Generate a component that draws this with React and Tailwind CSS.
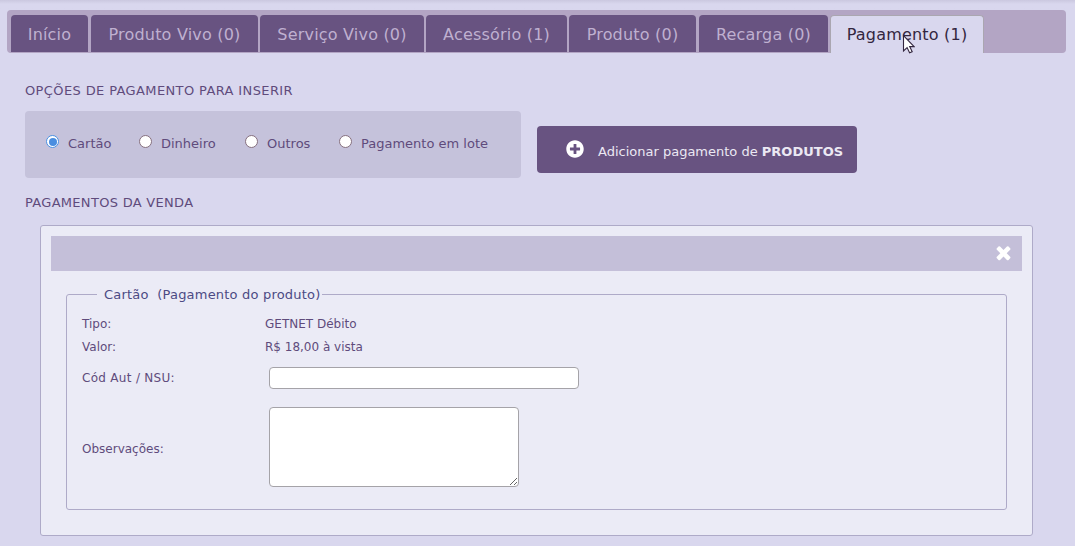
import { FaPlusCircle } from "react-icons/fa";

const tabs = [
  { label: "Início", cls: "ml-1 w-[77px]" },
  { label: "Produto Vivo (0)", cls: "ml-[3px] w-[167px]" },
  { label: "Serviço Vivo (0)", cls: "ml-[2px] w-[164px]" },
  { label: "Acessório (1)", cls: "ml-[2px] w-[141px]" },
  { label: "Produto (0)", cls: "ml-[2px] w-[127px]" },
  { label: "Recarga (0)", cls: "ml-[3px] w-[129px]" },
];

const options = [
  { label: "Cartão", cls: "w-[93px]", checked: true },
  { label: "Dinheiro", cls: "w-[106px]" },
  { label: "Outros", cls: "w-[94px]" },
  { label: "Pagamento em lote", cls: "w-[150px]" },
];

function Radio({ checked }) {
  return (
    <span
      className={
        "mt-[-4px] mr-[9px] flex size-[13px] shrink-0 items-center justify-center rounded-full border bg-white " +
        (checked ? "border-[#4a90e2]" : "border-[#86707f]")
      }
    >
      {checked && <span className="size-[8px] rounded-full bg-[#4a8ee0]" />}
    </span>
  );
}

function Cursor() {
  return (
    <svg className="absolute top-[18px] left-[71px]" width="13" height="20" viewBox="0 0 13 20">
      <path d="M1.5 1.5v15.5l3.6-3.4 2.5 5.2 2.6-1.1-2.5-5.1h4.4z" fill="#fff" stroke="#33263f" strokeWidth="1.1" />
    </svg>
  );
}

function CloseIcon() {
  return (
    <svg className="mb-[2px] size-[21px]" viewBox="0 0 1792 1792" fill="#fff">
      <path d="M1490 1322q0 40-28 68l-136 136q-28 28-68 28t-68-28l-294-294-294 294q-28 28-68 28t-68-28l-136-136q-28-28-28-68t28-68l294-294-294-294q-28-28-28-68t28-68l136-136q28-28 68-28t68 28l294 294 294-294q28-28 68-28t68 28l136 136q28 28 28 68t-28 68l-294 294 294 294q28 28 28 68z" />
    </svg>
  );
}

export default function App() {
  return (
    <div className="h-[546px] w-[1075px] overflow-hidden bg-[#d9d7ee] font-['DejaVu_Sans',sans-serif] text-[#5f4b7c]">
      <div className="h-[10px] bg-linear-to-b from-[#cbc8e0] to-[#d9d7ee] to-40%" />
      <nav className="ml-[7px] flex h-[43px] w-[1059px] rounded bg-[#b3a5c4] pt-[5px] text-[16px] tracking-[0.2px]">
        {tabs.map((t) => (
          <div
            key={t.label}
            className={"flex h-[37px] items-center justify-center rounded-t bg-[#685381] pt-[3px] whitespace-nowrap text-[#bfb0d0] " + t.cls}
          >
            {t.label}
          </div>
        ))}
        <div className="relative ml-[2px] flex h-[38px] w-[154px] items-center justify-center rounded-t border border-b-0 border-[#aaa6b0] bg-[#d9d7ee] pt-px whitespace-nowrap text-[#33263f]">
          Pagamento (1)
          <Cursor />
        </div>
      </nav>

      <h2 className="mt-[29px] ml-[25px] h-[16px] pt-px text-[13px] leading-[16px] tracking-[0.38px]">OPÇÕES DE PAGAMENTO PARA INSERIR</h2>
      <div className="mt-[13px] ml-[25px] flex h-[67px]">
        <div className="flex w-[496px] items-center rounded bg-[#c5c2db] pb-[2px] pl-[21px] text-[13px]">
          {options.map((o) => (
            <label key={o.label} className={"flex items-center whitespace-nowrap " + o.cls}>
              <Radio checked={o.checked} />
              {o.label}
            </label>
          ))}
        </div>
        <button className="mt-[15px] ml-4 flex h-[47px] w-[320px] items-center rounded bg-[#685381] pl-[29px] text-[13px] whitespace-nowrap text-[#ebe8f3]">
          <FaPlusCircle className="mt-[-2px] size-[18px] text-white" />
          <span className="mt-[5px] ml-[14px]">
            Adicionar pagamento de <b>PRODUTOS</b>
          </span>
        </button>
      </div>
      <h2 className="mt-[16px] ml-[25px] h-[16px] pt-px text-[13px] leading-[16px] tracking-[0.3px]">PAGAMENTOS DA VENDA</h2>

      <section className="mt-[15px] ml-[40px] h-[311px] w-[993px] rounded-[3px] border border-[#aeaac8] bg-[#ebebf6] p-[10px]">
        <div className="flex h-[35px] items-center justify-end bg-[#c4bfd9] pr-[8px]">
          <CloseIcon />
        </div>
        <div className="relative mt-[23px] ml-[15px] h-[216px] w-[941px] rounded-[3px] border border-[#aeaac8] text-[12px]">
          <div className="absolute top-[-9px] left-[30px] h-[17px] w-[225px] bg-[#ebebf6] pl-[7px] text-[13px] leading-[17px] tracking-[0.2px] whitespace-pre text-[#4b4a84]">
            {"Cartão  (Pagamento do produto)"}
          </div>
          <div className="mt-[17px] ml-[15px] grid grid-cols-[183px_1fr] grid-rows-[23px_23px_39px_100px] items-center">
            <span>Tipo:</span>
            <span>GETNET Débito</span>
            <span>Valor:</span>
            <span>R$ 18,00 à vista</span>
            <span className="tracking-[0.3px]">Cód Aut / NSU:</span>
            <input className="ml-1 h-[22px] w-[310px] rounded border border-[#a5a3a8] bg-white" />
            <span className="pt-[3px]">Observações:</span>
            <textarea className="ml-1 h-[80px] w-[250px] resize rounded border border-[#a5a3a8] bg-white" />
          </div>
        </div>
      </section>
    </div>
  );
}
